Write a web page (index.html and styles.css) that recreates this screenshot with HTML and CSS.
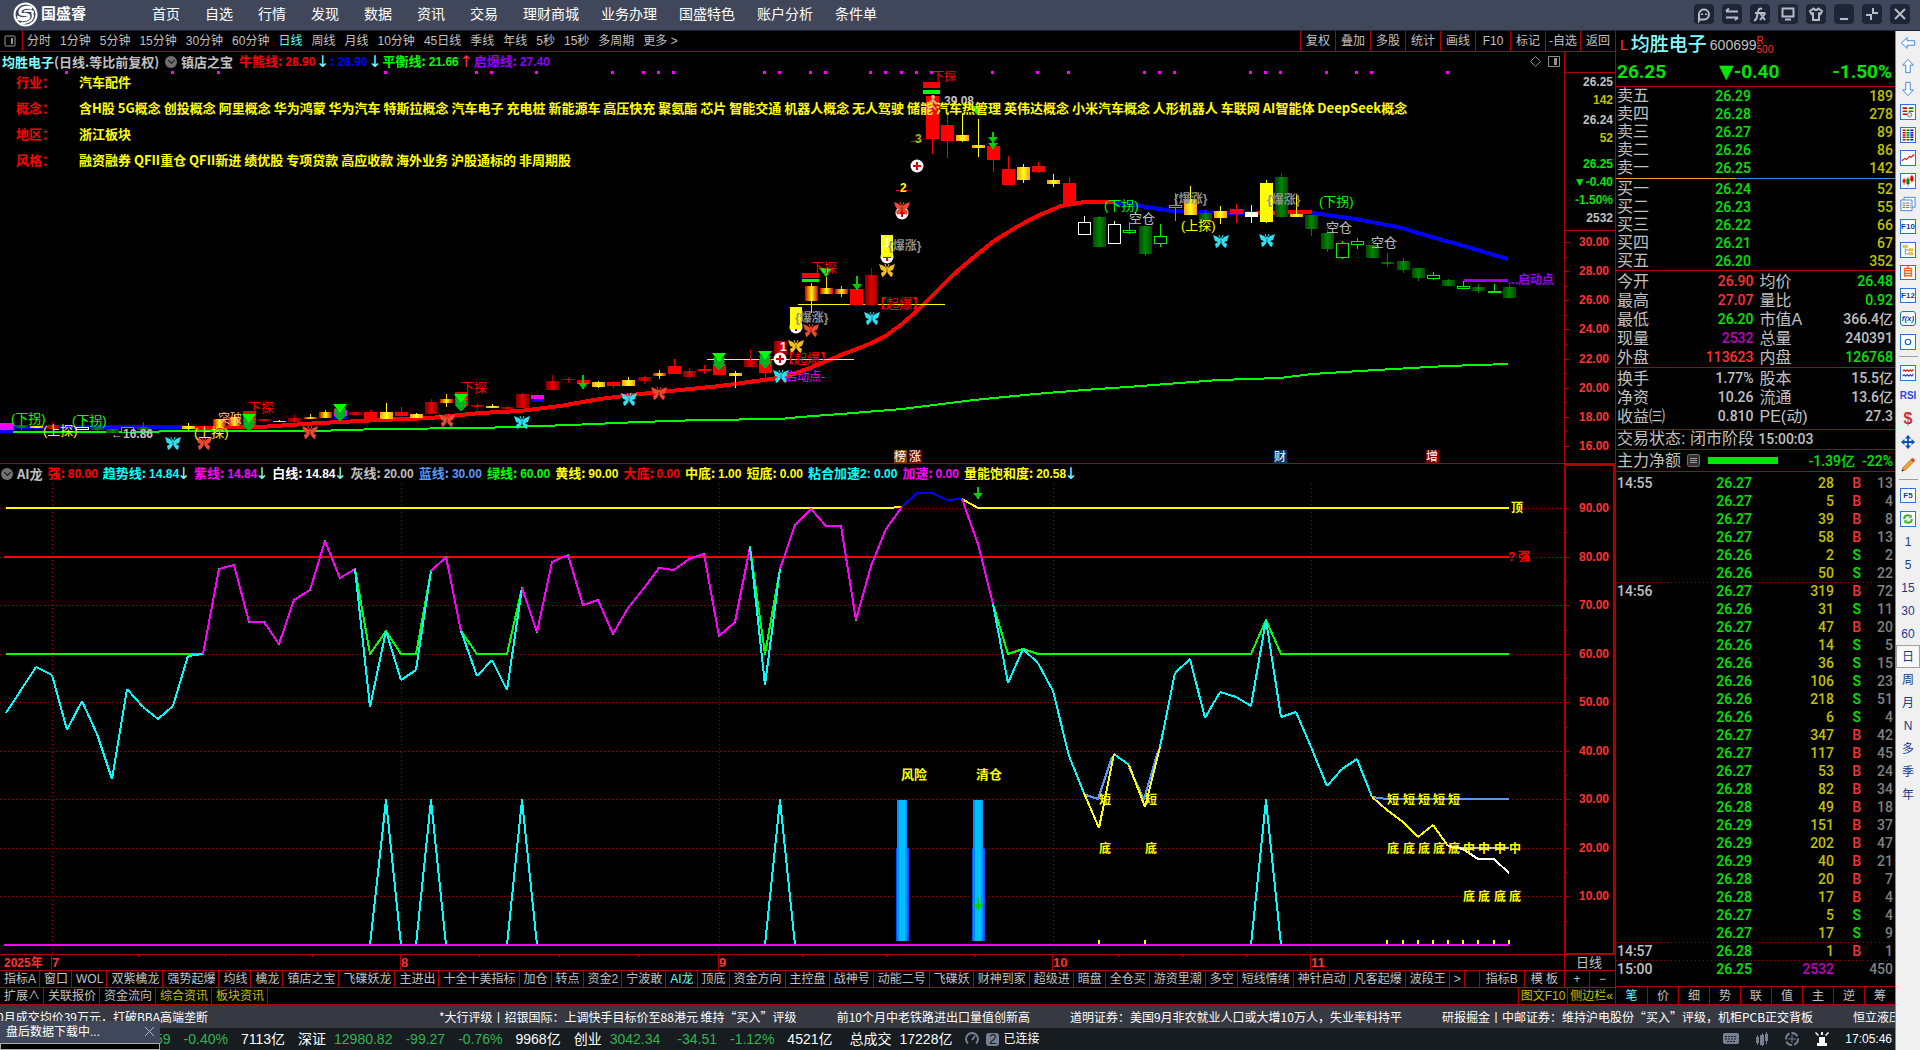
FILE: index.html
```html
<!DOCTYPE html>
<html lang="zh-CN">
<head>
    <meta charset="UTF-8">
    <title>国盛睿</title>
    <link rel="stylesheet" href="styles.css">
</head>
<body>
<header class="titlebar">
    <a class="logo" href="#">
        <svg width="25" height="25" viewBox="0 0 25 25" fill="none" stroke="#fff">
            <circle cx="12.5" cy="12.5" r="11" stroke-width="2"/>
            <path stroke-width="3" d="M19 6.500C15 4.500 8 5 7 9.500C6.500 13 10 12.500 13 12.500C17 12.500 17 17 12 17.500C9 18 6.500 17.500 4.500 16.500"/>
            <path stroke-width="2" d="M21 10C16 8 12 8.500 11 10M4 14.500C9 17 12.500 16 14 15M19 10.500C22 17 16 22 8 21"/>
        </svg>
        <span>国盛睿</span>
    </a>
    <nav class="menu">
        <a href="#">首页</a><a href="#">自选</a><a href="#">行情</a><a href="#">发现</a><a href="#">数据</a><a href="#">资讯</a><a href="#">交易</a>
        <a class="wide" href="#">理财商城</a><a class="wide" href="#">业务办理</a><a class="wide" href="#">国盛特色</a><a class="wide" href="#">账户分析</a><a class="wide" href="#">条件单</a>
    </nav>
    <div class="window-buttons">
        <button aria-label="客服"><svg viewBox="0 0 20 20"><path d="M6 15L5 16.500V10A5 5 0 1 1 10 15.500H5.500M8 9.500V11M12 9.500V11"/></svg></button>
        <button aria-label="切换"><svg viewBox="0 0 20 20"><path d="M4 7.500H16M4 13.500H16M4 7L7 4.500M16 13.500L13 16"/></svg></button>
        <button aria-label="公式"><svg viewBox="0 0 20 20"><path d="M4 16C7 17 7 11 8 8C8.500 4.500 10 4 12 5M5 9H15M10 16L15.500 9M10 9L15 16"/></svg></button>
        <button aria-label="屏幕"><svg viewBox="0 0 20 20"><path d="M4.500 4.500H15.500V12.500H4.500ZM7 15.500H13"/></svg></button>
        <button aria-label="皮肤"><svg viewBox="0 0 20 20"><path d="M7.500 4.500L4 7L5.500 10L7 9.500V16H13V9.500L14.500 10L16 7L12.500 4.500Q10 7.500 7.500 4.500Z"/></svg></button>
        <button aria-label="最小化"><svg viewBox="0 0 20 20"><path d="M6 15H14"/></svg></button>
        <button aria-label="还原"><svg viewBox="0 0 20 20"><path d="M11 4V9H16M9 16V11H4"/></svg></button>
        <button aria-label="关闭"><svg viewBox="0 0 20 20"><path d="M5 5L15 15M15 5L5 15"/></svg></button>
    </div>
</header>

<div class="shell">
    <div class="content">
        <div class="desk">
            <main class="left">
                <div class="periods">
                    <button class="pane-toggle" aria-label="侧栏"><svg width="12" height="12" viewBox="0 0 12 12"><rect x="1" y="1" width="10" height="10" rx="1" fill="none" stroke="#999"/><path d="M7 3H9V9H7Z" fill="#999"/></svg></button>
                    <div class="period-list">
                        <button>分时</button><button>1分钟</button><button>5分钟</button><button>15分钟</button><button>30分钟</button><button>60分钟</button><button class="on">日线</button><button>周线</button><button>月线</button><button>10分钟</button><button>45日线</button><button>季线</button><button>年线</button><button>5秒</button><button>15秒</button><button>多周期</button><button>更多 &gt;</button>
                    </div>
                    <div class="tools">
                        <button>复权</button><button>叠加</button><button>多股</button><button>统计</button><button>画线</button><button>F10</button><button>标记</button><button>-自选</button><button>返回</button>
                    </div>
                </div>

                <section class="panel">
                    <svg id="price-chart" class="chart" viewBox="0 52 1615 412"></svg>
                    <div class="overlay">
                        <div class="legend">
                            <span class="aqua">均胜电子</span><span class="gray">(日线.等比前复权)</span>
                            <button class="drop" aria-label="选择指标"></button>
                            <span class="gray">镇店之宝</span>
                            <span class="red first">牛熊线: <b>28.90</b></span><i class="aqua">↓</i>
                            <span class="blue">: <b>28.90</b></span><i class="aqua">↓</i>
                            <span class="lime">平衡线: <b>21.66</b></span><i class="rise">↑</i>
                            <span class="purple">启爆线: <b>27.40</b></span>
                        </div>
                        <dl class="facts">
                            <dt>行业：</dt><dd>汽车配件</dd>
                            <dt>概念：</dt><dd>含H股 5G概念 创投概念 阿里概念 华为鸿蒙 华为汽车 特斯拉概念 汽车电子 充电桩 新能源车 高压快充 聚氨酯 芯片 智能交通 机器人概念 无人驾驶 储能 汽车热管理 英伟达概念 小米汽车概念 人形机器人 车联网 AI智能体 DeepSeek概念</dd>
                            <dt>地区：</dt><dd>浙江板块</dd>
                            <dt>风格：</dt><dd>融资融券 QFII重仓 QFII新进 绩优股 专项贷款 高应收款 海外业务 沪股通标的 非周期股</dd>
                        </dl>
                    </div>
                </section>

                <section class="panel">
                    <svg id="trend-chart" class="chart" viewBox="0 464 1615 507"></svg>
                    <div class="overlay">
                        <div class="legend sub">
                            <button class="drop" aria-label="选择指标"></button>
                            <span class="gray">AI龙</span>
                            <span class="red">强: <b>80.00</b></span>
                            <span class="cyan">趋势线: <b>14.84</b></span><i class="aqua">↓</i>
                            <span class="magenta">紫线: <b>14.84</b></span><i class="aqua">↓</i>
                            <span class="white">白线: <b>14.84</b></span><i class="aqua">↓</i>
                            <span class="gray">灰线: <b>20.00</b></span>
                            <span class="sky">蓝线: <b>30.00</b></span>
                            <span class="lime">绿线: <b>60.00</b></span>
                            <span class="yellow">黄线: <b>90.00</b></span>
                            <span class="red">大底: <b>0.00</b></span>
                            <span class="yellow">中底: <b>1.00</b></span>
                            <span class="yellow">短底: <b>0.00</b></span>
                            <span class="cyan">粘合加速<b>2: 0.00</b></span>
                            <span class="magenta">加速: <b>0.00</b></span>
                            <span class="yellow">量能饱和度: <b>20.58</b></span><i class="aqua">↓</i>
                        </div>
                    </div>
                </section>

                <div class="tabs">
                    <button>指标A</button><button>窗口</button><button>WOL</button><button>双紫檎龙</button><button>强势起爆</button><button>均线</button><button>檎龙</button><button>镇店之宝</button><button>飞碟妖龙</button><button>主进出</button><button>十全十美指标</button><button>加仓</button><button>转点</button><button>资金2</button><button>宁波敢</button><button class="on">AI龙</button><button>顶底</button><button>资金方向</button><button>主控盘</button><button>战神号</button><button>动能二号</button><button>飞碟妖</button><button>财神到家</button><button>超级进</button><button>暗盘</button><button>全仓买</button><button>游资里潮</button><button>多空</button><button>短线情绪</button><button>神针启动</button><button>凡客起爆</button><button>波段王</button><button>&gt;</button>
                    <div class="tabs-end">
                        <button>指标B</button><button>模 板</button><button class="zoom">+</button><button class="zoom">−</button>
                    </div>
                </div>
                <div class="tabs">
                    <button>扩展∧</button><button>关联报价</button><button>资金流向</button><button class="olive">综合资讯</button><button class="olive">板块资讯</button>
                    <div class="tabs-end">
                        <button class="olive">图文F10</button><button class="olive">侧边栏«</button>
                    </div>
                </div>
            </main>

            <aside class="quote">
                <div class="quote-name">
                    <span class="flag">L</span><strong>均胜电子</strong><span>600699</span>
                    <span class="marks"><span>R</span><span>500</span></span>
                </div>
                <div class="quote-last"><span>26.25</span><span>▼-0.40</span><span>-1.50%</span></div>
                <table class="book">
                    <tr><th>卖五</th><td>26.29</td><td>189</td></tr>
                    <tr><th>卖四</th><td>26.28</td><td>278</td></tr>
                    <tr><th>卖三</th><td>26.27</td><td>89</td></tr>
                    <tr><th>卖二</th><td>26.26</td><td>86</td></tr>
                    <tr><th>卖一</th><td>26.25</td><td>142</td></tr>
                </table>
                <div class="balance"></div>
                <table class="book">
                    <tr><th>买一</th><td>26.24</td><td>52</td></tr>
                    <tr><th>买二</th><td>26.23</td><td>55</td></tr>
                    <tr><th>买三</th><td>26.22</td><td>66</td></tr>
                    <tr><th>买四</th><td>26.21</td><td>67</td></tr>
                    <tr><th>买五</th><td>26.20</td><td>352</td></tr>
                </table>
                <table class="facts-table">
                    <tr><th>今开</th><td class="up">26.90</td><th>均价</th><td class="down">26.48</td></tr>
                    <tr><th>最高</th><td class="up">27.07</td><th>量比</th><td class="down">0.92</td></tr>
                    <tr><th>最低</th><td class="down">26.20</td><th>市值A</th><td>366.4亿</td></tr>
                    <tr><th>现量</th><td class="violet">2532</td><th>总量</th><td>240391</td></tr>
                    <tr><th>外盘</th><td class="up">113623</td><th>内盘</th><td class="down">126768</td></tr>
                </table>
                <table class="facts-table">
                    <tr><th>换手</th><td>1.77%</td><th>股本</th><td>15.5亿</td></tr>
                    <tr><th>净资</th><td>10.26</td><th>流通</th><td>13.6亿</td></tr>
                    <tr><th>收益㈢</th><td>0.810</td><th>PE(动)</th><td>27.3</td></tr>
                </table>
                <div class="state">交易状态: 闭市阶段 <span>15:00:03</span></div>
                <div class="flow">
                    <span>主力净额</span>
                    <button class="list" aria-label="明细"><svg width="13" height="13" viewBox="0 0 13 13"><rect x="0.500" y="0.500" width="12" height="12" rx="2" fill="#333" stroke="#777"/><path d="M3 4.500H10M3 6.500H10M3 8.500H10" stroke="#999"/></svg></button>
                    <span class="flow-bar"></span>
                    <span class="down num">-1.39亿</span><span class="down num">-22%</span>
                </div>
                <table class="ticks"><tbody id="ticks"></tbody></table>
                <div class="quote-tabs">
                    <button class="on">笔</button><button>价</button><button>细</button><button>势</button><button>联</button><button>值</button><button>主</button><button>逆</button><button>筹</button>
                </div>
            </aside>
        </div>

        <div class="news">
            <a class="head" href="#">0月成交均价39万元，打破BBA高端垄断</a>
            <a href="#">*大行评级丨招银国际：上调快手目标价至88港元 维持“买入”评级</a>
            <a href="#">前10个月中老铁路进出口量值创新高</a>
            <a href="#">道明证券：美国9月非农就业人口或大增10万人，失业率料持平</a>
            <a href="#">研报掘金丨中邮证券：维持沪电股份“买入”评级，机柜PCB正交背板</a>
            <a href="#">恒立液压</a>
        </div>
        <footer class="status">
            <span class="drop-green">59</span><span class="drop-green">-0.40%</span><span>7113亿</span>
            <span>深证</span><span class="drop-green tight">12980.82</span><span class="drop-green">-99.27</span><span class="drop-green">-0.76%</span><span>9968亿</span>
            <span>创业</span><span class="drop-green tight">3042.34</span><span class="drop-green far">-34.51</span><span class="drop-green">-1.12%</span><span>4521亿</span>
            <span class="far">总成交</span><span class="tight">17228亿</span>
            <svg width="14" height="14" viewBox="0 0 14 14" fill="none" stroke="#777f94" stroke-width="2"><path d="M3 11.500A6 6 0 1 1 11 11.500M7 8L10 4"/></svg>
            <span class="badge">2</span><span class="linked">已连接</span>
            <div class="tray">
                <svg width="16" height="12" viewBox="0 0 16 12"><rect width="16" height="11" rx="2" fill="#777f94"/><path d="M2 3.500H14M2 6H14M4 8.500H12" stroke="#161c20" stroke-dasharray="2 1"/></svg>
                <svg width="14" height="14" viewBox="0 0 14 14" fill="#777f94"><path d="M1 5H4V11H1ZM5 3H9V13H5ZM10 2H13V9H10ZM2 3H3V13H2ZM7 1H8V14H7ZM11 0H12V12H11Z"/></svg>
                <svg width="14" height="14" viewBox="0 0 14 14" fill="none" stroke="#777f94"><circle cx="7" cy="7" r="6" stroke-width="2" stroke-dasharray="7 2"/><path d="M7 3V11M3 7H11"/></svg>
                <svg width="14" height="14" viewBox="0 0 14 14" fill="#fff"><path d="M4 5H10V11H12V14H2V11H4ZM3 4L0 1L1 0L4 3ZM6 3V0H8V3ZM10 3L13 0L14 1L11 4Z"/></svg>
                <time>17:05:46</time>
            </div>
            <div class="download">
                <div class="download-head"><span>盘后数据下载中...</span><button aria-label="关闭"><svg width="9" height="9" viewBox="0 0 9 9" stroke="#9cc0d8"><path d="M0 0L9 9M9 0L0 9"/></svg></button></div>
                <div class="download-bar"></div>
            </div>
        </footer>
    </div>

    <aside class="strip">
        <button aria-label="后退"><svg viewBox="0 0 18 18" fill="#fff" stroke="#3478e0"><path d="M1.500 9L8 3V6.500H16.500V11.500H8V15Z"/></svg></button>
        <button aria-label="上翻"><svg viewBox="0 0 18 18" fill="#fff" stroke="#3478e0"><path d="M9 1.500L15 8H11.500V16.500H6.500V8H3Z"/></svg></button>
        <button aria-label="下翻"><svg viewBox="0 0 18 18" fill="#fff" stroke="#3478e0"><path d="M9 16.500L15 10H11.500V1.500H6.500V10H3Z"/></svg></button>
        <button aria-label="报价"><svg class="boxed" viewBox="0 0 18 18" stroke-width="2"><path d="M2 4H8M2 8H8M2 12H8" stroke="#d00"/><path d="M10 4H16M10 8H16" stroke="#080"/><circle cx="11" cy="12.500" r="3" fill="#ddd" stroke="#777" stroke-width="1"/></svg></button>
        <button aria-label="列表"><svg class="boxed" viewBox="0 0 18 18" stroke-dasharray="2 1" stroke-width="4"><path d="M4 2V16" stroke="#d00"/><path d="M9 2V16" stroke="#080"/><path d="M14 2V16" stroke="#00c"/></svg></button>
        <button aria-label="分时图"><svg class="boxed" viewBox="0 0 18 18" fill="none" stroke="#e01010" stroke-width="1.500"><path d="M1 12.500L5 9.500L7 11L11 7L13 8L17 4.500"/></svg></button>
        <button aria-label="K线图"><svg class="boxed" viewBox="0 0 18 18"><path d="M4 5V14M14 1V11" stroke="#e00"/><path d="M9 4V16" stroke="#080"/><path d="M2 7H6V11H2ZM12 3H16V9H12Z" fill="#e00"/><path d="M7 6H11V13H7Z" fill="#080"/></svg></button>
        <button aria-label="多窗口"><svg viewBox="0 0 18 18" fill="#fff" stroke="#3478e0"><path d="M4.500 1.500H17V12.500H4.500Z"/><path d="M1 4.500H13.500V16.500H1Z"/><path d="M3 8H12M3 10.500H12M3 13H12" stroke="#555" stroke-dasharray="3 1"/></svg></button>
        <button><span class="key">F10</span></button>
        <button aria-label="板块"><svg class="boxed" viewBox="0 0 18 18" fill="#ffd060" stroke="#e0a010"><path d="M3 3H8V6H3ZM10 7.500H15V10H10ZM10 12.500H15V15H10Z"/><path d="M5.500 7V14H9M6 9H9" fill="none" stroke="#3478e0"/></svg></button>
        <button><span class="key orange">自</span></button>
        <button><span class="key">F12</span></button>
        <button><span class="key formula">f(x)</span></button>
        <button aria-label="圆"><svg class="boxed" viewBox="0 0 18 18" fill="none" stroke="#1a5fd0" stroke-width="1.500"><circle cx="9" cy="9" r="3.500"/></svg></button>
        <hr>
        <button aria-label="指标"><svg class="boxed" viewBox="0 0 18 18" fill="none" stroke-width="1.500"><path d="M2 7L4 5L6 7L8 5L10 7L12 5L14 7L16 4" stroke="#e02020"/><path d="M2 13L4 11L6 13L8 11L10 13L12 11L14 13L16 10" stroke="#3040e0"/></svg></button>
        <button class="rsi">RSI</button>
        <button class="money">$</button>
        <button aria-label="移动"><svg viewBox="0 0 18 18" fill="#0a50c0"><path d="M9 1L12.500 5H5.500ZM9 17L12.500 13H5.500ZM1 9L5 5.500V12.500ZM17 9L13 5.500V12.500ZM8 5H10V13H8ZM5 8H13V10H5Z"/></svg></button>
        <button aria-label="画笔"><svg viewBox="0 0 18 18"><path d="M2 16L3.500 11.500L12 3L15 6L6.500 14.500Z" fill="#f0a030" stroke="#905010" stroke-width="0.500"/><path d="M12 3L13.500 1.500Q15 1 16.500 3Q17 4 16.500 4.500L15 6Z" fill="#d04030"/><path d="M2 16L2.800 13.500L4.500 15.200Z" fill="#222"/></svg></button>
        <hr>
        <button><span class="key">F5</span></button>
        <button aria-label="刷新"><svg class="boxed" viewBox="0 0 18 18" fill="none" stroke="#40a830" stroke-width="2.500"><path d="M4 9C4 4 10 3 13 6M14 9C14 14 8 15 5 12"/><path d="M14 3V8H9ZM4 15V10H9Z" fill="#60c850" stroke="none"/></svg></button>
        <button>1</button><button>5</button><button>15</button><button>30</button><button>60</button>
        <button class="on">日</button><button>周</button><button>月</button><button>N</button><button>多</button><button>季</button><button>年</button>
    </aside>
</div>
<script src="charts.js"></script>
</body>
</html>
```
FILE: styles.css
```css
* {
    box-sizing: border-box;
}

body {
    margin: 0;
    min-height: 100vh;
    display: flex;
    flex-direction: column;
    background-color: #000;
    color: #c0c0c0;
    font: 12px/16px "Liberation Sans", "Noto Sans CJK SC", sans-serif;
    overflow-x: hidden;
}

button {
    padding: 0;
    border: 0;
    background: none;
    color: inherit;
    font: inherit;
    white-space: nowrap;
    cursor: pointer;
}

a {
    color: inherit;
    text-decoration: none;
}

/* title bar */
.titlebar {
    height: 31px;
    display: flex;
    align-items: center;
    padding: 0 10px 2px 13px;
    background-color: #40475a;
    border-bottom: 1px solid #1d2433;
    color: #fff;
}

.logo {
    width: 139px;
    display: flex;
    align-items: center;
    gap: 3px;
    font-size: 15px;
    font-weight: bold;
}

.menu {
    display: flex;
    gap: 25px;
    font-size: 14px;
}

.menu .wide + .wide {
    margin-left: -3px;
}

.window-buttons {
    margin-left: auto;
    display: flex;
    gap: 8px;
}

.window-buttons button {
    width: 20px;
    height: 20px;
    border-radius: 4px;
    background-color: #1d2536;
}

.window-buttons svg {
    display: block;
    fill: none;
    stroke: #b8bcc4;
    stroke-width: 2;
}

/* page frame */
.shell {
    flex: 1;
    display: flex;
}

.content {
    flex: 1;
    min-width: 0;
    display: flex;
    flex-direction: column;
}

.desk {
    display: flex;
}

.left {
    flex: 1;
    min-width: 0;
}

.periods {
    height: 21px;
    display: flex;
    align-items: stretch;
    border-bottom: 1px solid #b00000;
}

.pane-toggle {
    width: 23px;
    border-right: 1px solid #b00000;
}

.pane-toggle svg {
    display: block;
    margin: 0 auto 0 4px;
}

.period-list {
    display: flex;
    gap: 9px;
    padding-left: 4px;
}

.on {
    color: #55ffff;
}

.tools {
    margin-left: auto;
    display: flex;
}

.tools button {
    width: 35px;
    border-left: 1px solid #b00000;
}

/* the legends lie over the charts */
.panel {
    display: grid;
}

.panel > * {
    grid-area: 1 / 1;
}

.chart {
    display: block;
    width: 100%;
    height: auto;
    font-size: 12px;
}

.chart .bold {
    font-weight: bold;
}

.overlay {
    overflow: hidden;
}

.legend {
    height: 19px;
    display: flex;
    align-items: center;
    padding-left: 2px;
    font-family: "Noto Sans CJK SC", sans-serif;
    font-size: 13px;
    font-weight: bold;
    white-space: nowrap;
}

.legend > .drop {
    margin: 0 4px 0 6px;
}

.legend .first {
    margin-left: 6px;
}

.legend b {
    font-family: "Liberation Sans", sans-serif;
    font-size: 12px;
}

.legend i {
    width: 15px;
    font-family: "DejaVu Sans", sans-serif;
    font-size: 16px;
    font-style: normal;
    font-weight: normal;
    text-align: center;
}

.drop {
    width: 12px;
    height: 12px;
    border-radius: 6px;
    background-color: #707070;
    display: grid;
    place-items: center;
}

.drop::after {
    content: "";
    width: 4px;
    height: 4px;
    margin-bottom: 2px;
    border: solid #111;
    border-width: 0 1px 1px 0;
    transform: rotate(45deg);
}

.legend.sub {
    gap: 5px;
    padding-left: 1px;
}

.legend.sub > .drop {
    margin: 0 -1px 0 0;
}

.legend.sub i {
    width: 10px;
    margin: 0 0 0 -5px;
    text-indent: -2px;
}

.aqua { color: #80ffff; }
.gray { color: #c0c0c0; }
.white { color: #fff; }
.red { color: #f00; }
.rise { color: #ff3232; }
.blue { color: #00f; }
.sky { color: #5599ff; }
.cyan { color: #0ff; }
.lime { color: #0f0; }
.yellow { color: #ff0; }
.magenta { color: #f0f; }
.purple { color: #9400ff; }

.facts {
    display: grid;
    grid-template-columns: 63px auto;
    row-gap: 10px;
    margin: 3px 0 0 16px;
    font-family: "Noto Sans CJK SC", sans-serif;
    font-size: 13px;
    font-weight: bold;
    color: #ff0;
    white-space: nowrap;
}

.facts dt {
    color: #f00;
}

.facts dd {
    margin: 0;
}

/* indicator tabs */
.tabs {
    height: 17px;
    display: flex;
    align-items: stretch;
    border-bottom: 1px solid #b00000;
    overflow: hidden;
}

.tabs button {
    padding: 0 3px 0 4px;
    border-right: 1px solid #b00000;
}

.tabs-end {
    margin-left: auto;
    display: flex;
    border-left: 1px solid #b00000;
}

.tabs-end button {
    padding: 0 6px;
}

.tabs-end .olive {
    padding: 0 2px;
}

.tabs-end button:last-child {
    border-right: 0;
}

.tabs-end .zoom {
    width: 25px;
}

.olive {
    color: #c0c000;
}

/* quote column */
.quote {
    width: 280px;
    border: solid #b00000;
    border-width: 0 0 0 1px;
    display: flex;
    flex-direction: column;
    font-size: 16px;
    line-height: 18px;
}

.quote-name {
    height: 27px;
    display: flex;
    align-items: center;
    gap: 3px;
    padding-left: 4px;
    font-size: 14px;
}

.quote-name strong {
    color: #80ffff;
    font-size: 19px;
    font-weight: 500;
}

.flag, .marks {
    color: #ff3232;
}

.marks {
    display: grid;
    margin-left: -3px;
    font-size: 10px;
    line-height: 9px;
}

.quote-last {
    height: 29px;
    display: flex;
    justify-content: space-between;
    align-items: center;
    padding: 0 3px 0 1px;
    border-bottom: 1px solid #b00000;
    color: #00e600;
    font: bold 19px/24px Roboto, "DejaVu Sans", sans-serif;
}

.quote table {
    width: 100%;
    border-spacing: 0;
    table-layout: fixed;
}

.quote th, .quote td {
    padding: 0 2px 0 0;
    height: 18px;
    white-space: nowrap;
}

.quote th {
    padding: 0;
    font-weight: normal;
    text-align: left;
}

.quote td, .num, .state span {
    font-family: Roboto, "Noto Sans CJK SC", sans-serif;
    font-size: 14px;
    font-weight: 500;
    text-align: right;
}

.book td {
    color: #c0c000;
}

.book th {
    width: 60px;
    padding-left: 1px;
}

.book td:nth-child(2) {
    width: 77px;
    color: #00e600;
}

.balance {
    height: 1px;
    margin: 1px 0;
    background: linear-gradient(90deg, #e0a030 43%, #3c8cdc 43%);
}

.quote .facts-table {
    padding-top: 1px;
    border-top: 1px solid #b00000;
}

.quote .facts-table th, .quote .facts-table td {
    height: 19px;
    line-height: 19px;
}

.quote .facts-table th {
    padding-left: 1px;
    overflow: visible;
}

.quote .facts-table th + td + th {
    padding-left: 4px;
}

.up { color: #ff3232; }
.down { color: #00e600; }
.violet { color: #c000c0; }

.state {
    height: 20px;
    margin-top: 3px;
    padding-left: 1px;
    border-top: 1px solid #b00000;
}

.flow {
    height: 23px;
    display: flex;
    align-items: center;
    margin-bottom: 2px;
    padding: 0 2px 0 1px;
    border: solid #b00000;
    border-width: 1px 0;
}

.flow .list {
    margin: 0 8px 0 6px;
}

.flow .list svg {
    display: block;
}

.flow-bar {
    width: 70px;
    height: 7px;
    margin-right: auto;
    background-color: #00e600;
}

.flow .num + .num {
    margin-left: 7px;
}

.ticks td:nth-child(1) { width: 55px; text-align: left; padding-left: 1px; }
.ticks td:nth-child(2) { width: 83px; color: #00e600; }
.ticks td:nth-child(3) { width: 82px; color: #c0c000; }
.ticks td:nth-child(4) { width: 27px; color: #ff3232; }
.ticks td:nth-child(5) { color: #808080; }
.ticks .sell td:nth-child(4) { color: #00e600; }
.ticks .cross td:nth-child(3) { color: #c000c0; }
.ticks .minute td { background: repeating-linear-gradient(90deg, #900 0 1px, #000 1px 4px) top / 100% 1px no-repeat; }

.quote-tabs {
    height: 19px;
    margin-top: auto;
    display: grid;
    grid-template-columns: repeat(9, 1fr);
    border: solid #b00000;
    border-width: 1px 0;
    font-size: 12px;
}

.quote-tabs button + button {
    border-left: 1px solid #b00000;
}

/* news and status */
.news {
    height: 23px;
    display: flex;
    align-items: center;
    gap: 40px;
    overflow: hidden;
    background-color: #363842;
    color: #fff;
    font-family: "Noto Sans CJK SC", sans-serif;
    white-space: nowrap;
}

.news a {
    flex: none;
}

.news .head {
    width: 402px;
    margin-left: -3px;
}

.status {
    position: relative;
    flex: 1;
    min-height: 21px;
    display: flex;
    align-items: center;
    gap: 13px;
    padding: 0 3px 0 155px;
    background-color: #161c20;
    color: #fff;
    font-size: 14px;
    white-space: nowrap;
}

.drop-green {
    color: #32b450;
}

.status .tight {
    margin-left: -5px;
}

.status .far {
    margin-left: 4px;
}

.status .badge {
    width: 13px;
    margin: 0 -9px 0 -6px;
    border-radius: 3px;
    background-color: #777f94;
    color: #161c20;
    line-height: 13px;
    text-align: center;
}

.linked {
    font-size: 12px;
}

.tray {
    margin-left: auto;
    display: flex;
    align-items: center;
    gap: 16px;
    font-size: 12px;
}

.download {
    position: absolute;
    left: 0;
    bottom: 0;
    width: 160px;
    background-color: #40475a;
    font-size: 12px;
}

.download-head {
    height: 22px;
    display: flex;
    justify-content: space-between;
    align-items: center;
    padding: 0 6px;
}

.download-bar {
    height: 7px;
    border: 1px solid #aaa;
    background-color: #000;
}

/* right edge strip */
.strip {
    width: 25px;
    display: flex;
    flex-direction: column;
    align-items: center;
    border-left: 1px solid #888;
    background-color: #f0f0f0;
    color: #1a3c8c;
}

.strip button {
    width: 24px;
    height: 23px;
    display: grid;
    place-items: center;
}

.strip svg {
    width: 16px;
    height: 16px;
}

.strip .boxed, .key {
    background-color: #fff;
    border: 1px solid #2a74e0;
}

.key {
    width: 16px;
    height: 15px;
    color: #103cb0;
    font-size: 8px;
    font-weight: bold;
    line-height: 13px;
}

.key.orange {
    color: #ff6020;
    font-size: 11px;
}

.key.formula {
    border-color: #108080;
    border-radius: 3px;
    font-style: italic;
}

.strip hr {
    width: 19px;
    height: 1px;
    margin: 3px 0 4px;
    border: 0;
    background-color: #a0a0a0;
}

.strip .rsi {
    color: #3048d8;
    font-size: 10px;
    font-weight: bold;
}

.strip .money {
    color: #c83232;
    font-size: 16px;
    font-weight: bold;
}

.strip .on {
    border: 1px solid #a0a0a0;
    background-color: #f8f8f8;
    color: #1a3c8c;
}
```
FILE: charts.js
```js
var NS = "http://www.w3.org/2000/svg";

function add(parent, tag, attrs, text) {
    var el = document.createElementNS(NS, tag), key;
    for (key in attrs) {
        el.setAttribute(key, attrs[key]);
    }
    if (text) {
        el.textContent = text;
    }
    parent.appendChild(el);
    return el;
}

function x(i) {
    return Math.round(6 + i * 15.18);
}

function line(svg, x1, y1, x2, y2, color, width, dash) {
    return add(svg, "path", {
        d: "M" + x1 + " " + y1 + "L" + x2 + " " + y2,
        stroke: color, "stroke-width": width || 1, "stroke-dasharray": dash || "none",
        "shape-rendering": "crispEdges"
    });
}

function rect(svg, left, top, width, height, fill) {
    return add(svg, "rect", {x: left, y: top, width: width, height: height, fill: fill});
}

function poly(svg, points, color, width) {
    add(svg, "polyline", {
        points: points, fill: "none", stroke: color, "stroke-width": width,
        "stroke-linejoin": "round", "shape-rendering": "crispEdges"
    });
}

// y is the middle of the text line
function label(svg, left, y, text, color, size, bold, anchor) {
    add(svg, "text", {
        x: left, y: y + 4, fill: color, "font-size": size || 12,
        "class": bold ? "bold" : "", "text-anchor": anchor || "start"
    }, text);
}

function gradient(svg, id, edge, mid) {
    var g = add(svg, "linearGradient", {id: id});
    add(g, "stop", {offset: 0, "stop-color": edge});
    add(g, "stop", {offset: 0.5, "stop-color": mid});
    add(g, "stop", {offset: 1, "stop-color": edge});
}

var RED = "#b00000";

/* ---- price chart ---- */
// [index, kind, high, top, bottom, low]
var candles = [
    [0, "m", 423, 423, 430, 430], [1, "g", 425, 425, 428, 430], [2, "y", 426, 426, 428, 428], [3, "r", 422, 425, 429, 429],
    [5, "w", 427, 427, 429, 430], [6, "g", 427, 427, 430, 431], [7, "g", 429, 429, 433, 433], [8, "h", 427, 427, 432, 432],
    [9, "g", 422, 427, 430, 430], [12, "y", 423, 426, 429, 430], [14, "o", 419, 419, 427, 427], [15, "o", 414, 417, 426, 426],
    [16, "R", 411, 411, 428, 428], [17, "r", 419, 419, 421, 421], [18, "y", 420, 421, 422, 422], [19, "r", 415, 418, 422, 423],
    [20, "o", 414, 417, 419, 419], [21, "o", 410, 412, 418, 418], [22, "m", 410, 410, 416, 416], [23, "r", 412, 412, 415, 415],
    [24, "R", 410, 412, 419, 419], [25, "y", 403, 412, 419, 419], [26, "R", 407, 412, 416, 418], [27, "y", 413, 414, 418, 418],
    [28, "r", 399, 402, 414, 414], [29, "o", 394, 399, 403, 407], [30, "R", 392, 392, 405, 405], [31, "r", 403, 405, 407, 410],
    [32, "y", 404, 406, 408, 408], [33, "r", 406, 407, 409, 409], [34, "r", 393, 394, 408, 408], [35, "m", 390, 395, 399, 399],
    [36, "r", 375, 381, 390, 390], [37, "r", 377, 379, 380, 383], [38, "R", 379, 380, 384, 384], [39, "y", 381, 382, 387, 388],
    [40, "R", 381, 382, 386, 388], [41, "y", 377, 380, 386, 386], [42, "r", 376, 377, 381, 384], [43, "o", 370, 373, 376, 379],
    [44, "R", 359, 366, 374, 374], [45, "r", 368, 371, 377, 379], [46, "R", 365, 369, 371, 374], [47, "R", 365, 365, 375, 375],
    [48, "y", 371, 373, 376, 388], [49, "r", 349, 360, 367, 367], [50, "R", 360, 360, 373, 378], [51, "r", 341, 341, 355, 355],
    [53, "o", 283, 286, 301, 313], [54, "o", 277, 288, 294, 294], [55, "o", 286, 289, 294, 297], [56, "R", 289, 289, 305, 305],
    [57, "r", 268, 275, 305, 305], [61, "R", 96, 96, 139, 154], [62, "R", 113, 125, 141, 158], [63, "y", 113, 135, 141, 142],
    [64, "y", 119, 145, 148, 157], [65, "R", 146, 146, 160, 172], [66, "R", 156, 169, 185, 185], [67, "y", 164, 167, 180, 183],
    [68, "R", 162, 166, 172, 173], [69, "y", 174, 180, 184, 187], [70, "R", 177, 183, 205, 205], [71, "w", 216, 222, 234, 235],
    [72, "g", 216, 217, 247, 247], [73, "w", 221, 224, 243, 244], [74, "h", 222, 230, 232, 234], [75, "g", 226, 226, 254, 256],
    [76, "h", 224, 236, 243, 247], [77, "h", 193, 205, 207, 221], [78, "y", 186, 199, 215, 215], [79, "g", 210, 213, 222, 222],
    [80, "y", 206, 211, 218, 224], [81, "R", 204, 209, 214, 223], [82, "W", 205, 212, 217, 223], [83, "Y", 180, 183, 222, 223],
    [84, "g", 173, 177, 217, 217], [85, "y", 194, 214, 217, 217], [86, "g", 215, 215, 229, 236], [87, "g", 230, 233, 249, 252],
    [88, "h", 241, 243, 257, 259], [89, "h", 238, 241, 244, 249], [90, "g", 245, 245, 258, 258], [91, "g", 253, 262, 264, 267],
    [92, "g", 258, 261, 270, 273], [93, "g", 268, 268, 278, 281], [94, "h", 272, 275, 278, 280], [95, "g", 279, 280, 286, 286],
    [96, "h", 281, 286, 288, 288], [97, "g", 284, 287, 291, 293], [98, "h", 284, 291, 292, 292], [99, "g", 285, 287, 298, 298]
];

var wick = {
    r: "#b40000", R: "#f00", y: "#ffff00", Y: "#ff0", o: "#ffd000",
    g: "#008000", h: "#00f000", w: "#fff", W: "#fff", m: "#00f"
};
var body = {
    r: "url(#dark-red)", R: "#f00", y: "url(#gold)", Y: "#ff0", o: "url(#fire)",
    g: "url(#forest)", h: "#000", w: "#000", W: "#fff", m: "#f0f"
};

function drawCandle(svg, c) {
    var cx = x(c[0]), kind = c[1], box;
    line(svg, cx + 0.5, c[2], cx + 0.5, c[5], wick[kind]);
    if (kind === "h" || kind === "w") {
        box = rect(svg, cx - 5.5, c[3] + 0.5, 12, c[4] - c[3], body[kind]);
        box.setAttribute("stroke", wick[kind]);
        box.setAttribute("shape-rendering", "crispEdges");
    } else {
        rect(svg, cx - 6, c[3], 13, c[4] - c[3], body[kind]);
    }
    if (kind === "m") {
        rect(svg, cx - 6, c[4], 13, 3, "#00f");
    }
}

function butterfly(svg, cx, cy, color) {
    var g = add(svg, "g", {transform: "translate(" + cx + " " + cy + ")"});
    add(g, "path", {
        fill: color,
        d: "M0 -1L-3 -4L-8 -6L-6 0L-3 1L-6 3L-5 7L-3 6L0 2L3 6L5 7L6 3L3 1L6 0L8 -6L3 -4Z"
    });
    add(g, "path", {fill: "none", stroke: color, d: "M0 -1L-2 -6M0 -1L2 -6"});
    add(g, "path", {fill: "none", stroke: "#000", "stroke-opacity": 0.5, d: "M0 -1V3"});
}

// falling marker: triangle with chevrons under it
function fall(svg, cx, top, plain) {
    for (var k = 0; k < 3 && !plain; k++) {
        poly(svg, (cx - 5) + "," + (top + 5 + 3 * k) + " " + cx + "," + (top + 10 + 3 * k) + " " + (cx + 5) + "," + (top + 5 + 3 * k), "#00b020", 2);
    }
    add(svg, "path", {fill: "#0f0", d: "M" + (cx - 7) + " " + top + "H" + (cx + 7) + "L" + cx + " " + (top + 9) + "Z"});
}

function arrow(svg, cx, top, length) {
    line(svg, cx, top, cx, top + length, "#00d000", 2);
    add(svg, "path", {
        fill: "#00d000",
        d: "M" + (cx - 5) + " " + (top + length - 6) + "H" + (cx + 5) + "L" + cx + " " + (top + length) + "Z"
    });
}

function pill(svg, cx, cy) {
    add(svg, "circle", {cx: cx, cy: cy, r: 6.5, fill: "#fff"});
    add(svg, "path", {stroke: "#e00000", "stroke-width": 2, d: "M" + (cx - 4) + " " + cy + "h8M" + cx + " " + (cy - 4) + "v8"});
}

function drawPrice() {
    var svg = document.getElementById("price-chart"), i, y;

    gradient(svg, "dark-red", "#800000", "#e80000");
    gradient(svg, "gold", "#ff9c00", "#ffff20");
    gradient(svg, "fire", "#d00000", "#ffff00");
    gradient(svg, "forest", "#004800", "#008800");

    // signal dots
    [4, 11, 14, 25, 31, 32, 35, 40, 42, 43, 44, 50, 51, 53, 54, 57, 58, 59, 60, 61, 65, 68, 70, 75, 76, 77, 82, 83, 84, 87, 89, 90, 95]
        .forEach(function (n) {
            rect(svg, x(n) - 2, 71, 3, 3, "#f0f");
        });

    // averages
    poly(svg, "10,427 60,427 110,427 195,427", "#00f", 4);
    poly(svg, "195,428 260,427 320,423 380,420 430,418 480,413 520,411 560,406 600,399 640,394 680,390 720,386 778,378 790,375 810,368 841,355 872,343 887,335 902,324 918,310 933,295 953,275 974,257 994,241 1015,228 1035,217 1061,206 1084,202 1114,202", "#f00", 4);
    poly(svg, "1114,202 1141,206 1172,211 1219,213 1264,213", "#00f", 4);
    poly(svg, "1256,213 1312,212", "#f00", 4);
    poly(svg, "1312,213 1356,219 1402,228 1428,236 1464,246 1508,259", "#00f", 4);
    poly(svg, "5,432 315,431 380,429 480,428 570,425 640,422 700,420 780,419 800,417 841,414 902,409 974,400 1035,394 1084,390 1141,386 1219,380 1280,378 1312,374 1376,370 1447,366 1508,364", "#0f0", 2);
    line(svg, 1464, 280, 1508, 280, "#9400ff", 3);
    line(svg, 707, 359.5, 854, 359.5, "#ff0");
    line(svg, 798, 304.5, 945, 304.5, "#ff0");

    candles.forEach(function (c) {
        drawCandle(svg, c);
    });

    // limit-up days
    pill(svg, 780, 359);
    pill(svg, 796, 327);
    pill(svg, 887, 257);
    pill(svg, 902, 213);
    pill(svg, 917, 166);
    rect(svg, 790, 307, 12, 22, "#ff0");
    rect(svg, 881, 235, 12, 22, "#ff0");
    rect(svg, 802, 273, 17, 5, "#f00");
    rect(svg, 802, 279, 17, 3, "#0f0");
    rect(svg, 923, 82, 17, 6, "#f00");
    rect(svg, 923, 90, 17, 4, "#0f0");
    label(svg, 780, 347, "1", "#fff", 12, true);
    label(svg, 884, 243, "1", "#fff", 12, true);
    line(svg, 896, 190.5, 908, 190.5, "#f00");
    label(svg, 900, 188, "2", "#ff0", 12, true);
    line(svg, 911, 141.5, 922, 141.5, "#f00");
    label(svg, 915, 139, "3", "#a0c000", 12, true);

    [[173, 443], [522, 422], [629, 399], [781, 376], [872, 318], [1221, 241], [1267, 240]].forEach(function (p) {
        butterfly(svg, p[0], p[1], "#30e0f0");
    });
    [[204, 443], [310, 432], [447, 420], [659, 393], [811, 330], [902, 208]].forEach(function (p) {
        butterfly(svg, p[0], p[1], "#f04830");
    });
    [[796, 346], [887, 270]].forEach(function (p) {
        butterfly(svg, p[0], p[1], "#f0c020");
    });

    fall(svg, 249, 414);
    fall(svg, 340, 404);
    fall(svg, 461, 394);
    fall(svg, 719, 353);
    fall(svg, 765, 351);
    fall(svg, 826, 268, true);
    fall(svg, 977, 106, true);
    arrow(svg, 583, 375, 14);
    arrow(svg, 857, 276, 14);
    arrow(svg, 993, 132, 11);
    arrow(svg, 993, 138, 11);

    // small walking figure at the peak
    add(svg, "circle", {cx: 933, cy: 97, r: 2, fill: "#f0c090"});
    add(svg, "path", {fill: "none", stroke: "#e0a060", "stroke-width": 2, d: "M933 99L932 105L928 110M932 105L936 110M929 103L933 100L937 104"});

    label(svg, 11, 419, "(下拐)", "#0f0", 13);
    label(svg, 72, 421, "(下拐)", "#0f0", 13);
    label(svg, 1104, 206, "(下拐)", "#0f0", 13);
    label(svg, 1319, 202, "(下拐)", "#0f0", 13);
    label(svg, 43, 431, "(上探)", "#ff0", 13);
    label(svg, 194, 433, "(上探)", "#ff0", 13);
    label(svg, 1181, 226, "(上探)", "#ff0", 13);
    label(svg, 218, 419, "突破", "#ffc0a0", 12);
    label(svg, 111, 434, "←16.86", "#c0c0c0", 12, true);
    label(svg, 932, 101, "←39.08", "#c0c0c0", 12, true);
    label(svg, 248, 408, "下探", "#f00", 13);
    label(svg, 461, 388, "下探", "#f00", 13);
    label(svg, 811, 268, "下探", "#f00", 13);
    label(svg, 932, 77, "下探", "#f00", 12);
    label(svg, 795, 318, "{爆涨}", "#909090", 12, true);
    label(svg, 888, 246, "{爆涨}", "#909090", 12, true);
    label(svg, 1174, 199, "{爆涨}", "#909090", 12, true);
    label(svg, 1267, 200, "{爆涨}", "#909090", 12, true);
    label(svg, 781, 359, "【起爆】", "#f00", 13);
    label(svg, 873, 304, "【起爆】", "#f00", 13);
    label(svg, 785, 377, "启动点-", "#f0f");
    label(svg, 1508, 280, "...启动点", "#9400ff", 12, true);
    label(svg, 1129, 219, "空仓", "#c0c0c0", 13);
    label(svg, 1326, 228, "空仓", "#c0c0c0", 13);
    label(svg, 1371, 243, "空仓", "#c0c0c0", 13);

    [[894, "榜", "#804000"], [909, "涨", "#800000"], [1274, "财", "#003870"], [1426, "增", "#800000"]].forEach(function (m) {
        rect(svg, m[0], 450, 13, 13, m[2]);
        label(svg, m[0], 457, m[1], "#fff");
    });

    // price scale
    add(svg, "path", {fill: "none", stroke: "#909090", d: "M1530.500 61.500L1535.500 56.500L1540.500 61.500L1535.500 66.500ZM1548.500 56.500H1559.500V66.500H1548.500Z"});
    rect(svg, 1554, 58, 3, 7, "#909090");
    line(svg, 1564.5, 52, 1564.5, 464, RED);
    line(svg, 1564, 72.5, 1615, 72.5, RED);
    line(svg, 1564, 230.5, 1615, 230.5, RED);
    line(svg, 0, 463.5, 1615, 463.5, RED);
    [[82, "26.25", "#c0c0c0"], [100, "142", "#c0c000"], [120, "26.24", "#c0c0c0"], [138, "52", "#c0c000"],
        [164, "26.25", "#00e600"], [182, "▼-0.40", "#00e600"], [200, "-1.50%", "#00e600"], [218, "2532", "#c0c0c0"]
    ].forEach(function (r) {
        label(svg, 1613, r[0], r[1], r[2], 12, true, "end");
    });
    for (i = 30; i >= 16; i--) {
        y = Math.round(242 + (30 - i) * 14.57);
        line(svg, 1564, y + 0.5, i % 2 ? 1567 : 1569, y + 0.5, RED);
        if (i % 2 === 0) {
            label(svg, 1609, y, i + ".00", "#ff3232", 12, true, "end");
        }
    }
}

/* ---- AI trend chart ---- */
var trend = [
    47.9, 52.5, 57.3, 55.6, 44.2, 50.3, 43.5, 34.3, 52.7, 49, 46.5, 49.3, 59.5, 60, 77.5, 78.4, 66.6, 66.6, 62, 71,
    73.2, 83.2, 75.6, 77.5, 49, 64.8, 54.6, 56.6, 77, 80, 64.6, 55.5, 58.7, 52.6, 73.5, 64.5, 79, 80.3, 70, 71,
    64, 69.5, 73.5, 77.6, 77.3, 79.5, 80.6, 63.7, 66.5, 82, 53.6, 77.5, 86.6, 89.8, 86.3, 86.3, 67, 78, 85.8, 90.2,
    93.2, 93.2, 91.6, 92, 82.6, 70.3, 54, 61, 58.2, 52.4, 39, 31.3, 24.2, 39.4, 37, 28.5, 40.9, 56.1, 58.9, 46.7,
    52.1, 51, 49.2, 67, 46.9, 48.1, 40.7, 32.7, 36.3, 38.4, 30.4, 27.8, 25.4, 22.3, 24.8, 20.3, 19.7, 17.8, 17.8, 14.84
];

function ty(v) {
    return Math.round(945 - v * 4.853);
}

function floorLine(svg, level, from, to, color) {
    var points = [];
    for (var i = from; i <= to; i++) {
        points.push(x(i) + "," + ty(Math.max(trend[i], level)));
    }
    poly(svg, points.join(" "), color, 2);
}

function segmentColor(a, b) {
    var low = Math.min(a, b);
    if (low < 20) return "#fff";
    if (low < 30) return "#ff0";
    if (low >= 90) return "#00f";
    return low >= 60 ? "#f0f" : "#0ff";
}

function drawTrend() {
    var svg = document.getElementById("trend-chart"), i, last = trend.length - 1;

    for (i = 10; i <= 90; i += 10) {
        line(svg, 0, ty(i) + 0.5, 1564, ty(i) + 0.5, "#a00000", 1, "1 3");
        label(svg, 1609, ty(i), i + ".00", "#ff3232", 12, true, "end");
        line(svg, 1564, ty(i) + 0.5, 1569, ty(i) + 0.5, RED);
        line(svg, 1564, ty(i - 5) + 0.5, 1567, ty(i - 5) + 0.5, RED);
    }
    [[3, "7"], [26, "8"], [47, "9"], [69, "10"], [86, "11"]].forEach(function (m) {
        line(svg, x(m[0]) + 0.5, 484, x(m[0]) + 0.5, 954, "#a00000", 1, "1 3");
        line(svg, x(m[0]) - 0.5, 954, x(m[0]) - 0.5, 970, RED);
        label(svg, x(m[0]), 963, m[1], "#ff3232", 13, true);
    });
    [138, 225, 312, 479, 559, 638, 802, 886, 974, 1118, 1182, 1246].forEach(function (t) {
        line(svg, t + 0.5, 954, t + 0.5, 957, RED);
    });
    label(svg, 4, 963, "2025年", "#ff3232", 12, true);
    line(svg, 0, 954.5, 1615, 954.5, RED);
    line(svg, 0, 970.5, 1615, 970.5, RED);
    line(svg, 1564.5, 954, 1564.5, 971, RED);
    add(svg, "rect", {x: 1565, y: 465, width: 49, height: 489, fill: "none", stroke: RED, "stroke-width": 2});
    label(svg, 1576, 963, "日线", "#c0c0c0", 13);

    // warning columns
    [59, 64].forEach(function (n) {
        rect(svg, x(n) - 6, 848, 13, 93, "#0050ff");
        rect(svg, x(n) - 5, 800, 10, 141, "#0090ff");
        rect(svg, x(n) - 3, 800, 6, 141, "#00c0ff");
    });
    arrow(svg, x(64), 898, 12);
    arrow(svg, x(64), 487, 12);

    line(svg, x(0) - 2, 557, x(last), 557, "#f00", 2);
    floorLine(svg, 90, 0, last, "#ff0");
    floorLine(svg, 60, 0, last, "#0f0");
    // the trend line alone shows above the 60 level
    for (i = 0; i < last; i++) {
        poly(svg, x(i) + "," + ty(trend[i]) + " " + x(i + 1) + "," + ty(trend[i + 1]), segmentColor(trend[i], trend[i + 1]), 2);
    }
    floorLine(svg, 30, 90, last, "#5599ff");
    poly(svg, "1083,794 1098,799 1112,757", "#5599ff", 2);
    poly(svg, "1129,768 1144,799 1158,751", "#5599ff", 2);
    floorLine(svg, 20, 95, last, "#c0c0c0");
    for (i = 71; i < last; i++) {
        if (Math.min(trend[i], trend[i + 1]) < 30) {
            poly(svg, x(i) + "," + ty(trend[i]) + " " + x(i + 1) + "," + ty(trend[i + 1]), segmentColor(trend[i], trend[i + 1]), 2);
        }
    }

    [25, 28, 34, 51, 83].forEach(function (n) {
        poly(svg, x(n - 1) + ",945 " + x(n) + ",800 " + x(n + 1) + ",945", "#0ff", 2);
    });
    line(svg, x(0) - 2, 945, x(last), 945, "#f0f", 2);
    [72, 75, 91, 92, 93, 94, 95, 96, 97, 98, 99].forEach(function (n) {
        line(svg, x(n), 940, x(n), 944, "#ff0", 2);
    });

    [72, 75, 91, 92, 93, 94, 95].forEach(function (n) {
        label(svg, x(n), 800, "短", "#ff0", 12, true);
        label(svg, x(n), 849, "底", "#ff0", 12, true);
    });
    [96, 97, 98, 99].forEach(function (n) {
        label(svg, x(n), 849, "中", "#ff0", 12, true);
        label(svg, x(n), 897, "底", "#ff0", 12, true);
    });
    label(svg, 901, 775, "风险", "#ff0", 13, true);
    label(svg, 976, 775, "清仓", "#ff0", 13, true);
    label(svg, 1511, 508, "顶", "#ff0", 12, true);
    label(svg, 1508, 557, "?", "#f00", 12, true);
    label(svg, 1518, 557, "强", "#f00", 12, true);
}

/* ---- trades ---- */
// time, price, volume, side, count
var trades = [
    ["14:55", "26.27", 28, "B", 13], ["", "26.27", 5, "B", 4], ["", "26.27", 39, "B", 8], ["", "26.27", 58, "B", 13],
    ["", "26.26", 2, "S", 2], ["", "26.26", 50, "S", 22], ["14:56", "26.27", 319, "B", 72], ["", "26.26", 31, "S", 11],
    ["", "26.27", 47, "B", 20], ["", "26.26", 14, "S", 5], ["", "26.26", 36, "S", 15], ["", "26.26", 106, "S", 23],
    ["", "26.26", 218, "S", 51], ["", "26.26", 6, "S", 4], ["", "26.27", 347, "B", 42], ["", "26.27", 117, "B", 45],
    ["", "26.27", 53, "B", 24], ["", "26.28", 82, "B", 34], ["", "26.28", 49, "B", 18], ["", "26.29", 151, "B", 37],
    ["", "26.29", 202, "B", 47], ["", "26.29", 40, "B", 21], ["", "26.28", 20, "B", 7], ["", "26.28", 17, "B", 4],
    ["", "26.27", 5, "S", 4], ["", "26.27", 17, "S", 9], ["14:57", "26.28", 1, "B", 1], ["15:00", "26.25", 2532, "", 450]
];

function fillTrades() {
    var tbody = document.getElementById("ticks");
    trades.forEach(function (row, n) {
        var tr = tbody.insertRow();
        if (row[3] === "S") tr.classList.add("sell");
        if (row[3] === "") tr.classList.add("cross");
        if (row[0] && n) tr.classList.add("minute");
        row.forEach(function (value) {
            tr.insertCell().textContent = value;
        });
    });
}

drawPrice();
drawTrend();
fillTrades();
```
